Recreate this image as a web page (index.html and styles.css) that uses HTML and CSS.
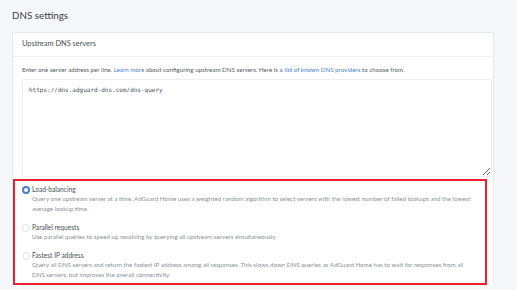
FILE: index.html
```html
<!DOCTYPE html>
<html lang="en">
<head>
  <meta charset="UTF-8">
  <title>DNS settings</title>
  <link rel="stylesheet" href="styles.css">
</head>
<body>
  <h1 class="page-title">DNS settings</h1>

  <div class="card">
    <div class="card-header">Upstream DNS servers</div>
    <div class="card-body">
      <p class="hint">Enter one server address per line. <a href="#">Learn more</a> about configuring upstream DNS servers. Here is a <a href="#">list of known DNS providers</a> to choose from.</p>
      <textarea class="upstream">https://dns.adguard-dns.com/dns-query</textarea>

      <!-- modo de consulta -->
      <div class="modes">
        <label class="mode">
          <span class="radio checked"></span>
          <span class="mode-text">
            <span class="mode-title">Load-balancing</span>
            <span class="mode-desc">Query one upstream server at a time. AdGuard Home uses a weighted random algorithm to select servers with the lowest number of failed lookups and the lowest average lookup time.</span>
          </span>
        </label>
        <label class="mode">
          <span class="radio"></span>
          <span class="mode-text">
            <span class="mode-title">Parallel requests</span>
            <span class="mode-desc">Use parallel queries to speed up resolving by querying all upstream servers simultaneously.</span>
          </span>
        </label>
        <label class="mode">
          <span class="radio"></span>
          <span class="mode-text">
            <span class="mode-title">Fastest IP address</span>
            <span class="mode-desc">Query all DNS servers and return the fastest IP address among all responses. This slows down DNS queries as AdGuard Home has to wait for responses from all DNS servers, but improves the overall connectivity.</span>
          </span>
        </label>
      </div>
    </div>
  </div>
</body>
</html>
```

FILE: styles.css
```css
body {
  margin: 0;
  padding: 0 23px 0 12px;
  background-color: #f5f7fb;
  color: #495057;
  font-family: Lato, "Open Sans", sans-serif;
}
.page-title {
  margin: 0;
  height: 32px;
  line-height: 30px;
  font-size: 9.8px;
  font-weight: 400;
  color: #3d4247;
}
.card {
  background-color: #fff;
  border: 1px solid #e6e9ee;
  border-radius: 2px;
  border-bottom: none;
}
.card-header {
  height: 23px;
  line-height: 21px;
  padding: 0 9px;
  font-size: 7.4px;
  border-bottom: 1px solid #eef0f3;
}
.card-body {
  padding: 7px 9px 0 0;
}
.hint {
  margin: 0 0 3px 9px;
  font-size: 6.2px;
  line-height: 12px;
  color: #555b61;
}
a {
  color: #467fcf;
  text-decoration: none;
}
.upstream {
  display: block;
  box-sizing: border-box;
  margin-left: 9px;
  width: calc(100% - 1px);
  height: 98px;
  padding: 6px 6px;
  border: 1px solid #eceef2;
  border-radius: 2px;
  font-family: "DejaVu Sans Mono", monospace;
  font-size: 6px;
  color: #495057;
  resize: vertical;
}
.modes {
  margin-top: 2px;
  border: 2px solid #e8232f;
  padding: 3.5px 8px 3px 7px;
  width: 474px;
  box-sizing: border-box;
}
.mode {
  display: flex;
  gap: 2px;
  margin-bottom: 9px;
}
.mode:last-child {
  margin-bottom: 0;
}
.radio {
  flex: none;
  box-sizing: border-box;
  width: 8px;
  height: 8px;
  margin-top: 1px;
  border: 1px solid #dfe2e7;
  border-radius: 50%;
  background: #fff;
}
.radio.checked {
  border: 2.5px solid #467fcf;
}
.mode-text {
  display: flex;
  flex-direction: column;
}
.mode-title {
  font-size: 6.6px;
  line-height: 9px;
  color: #495057;
}
.mode-desc {
  font-size: 6.2px;
  line-height: 10px;
  color: #8c9199;
}
```
